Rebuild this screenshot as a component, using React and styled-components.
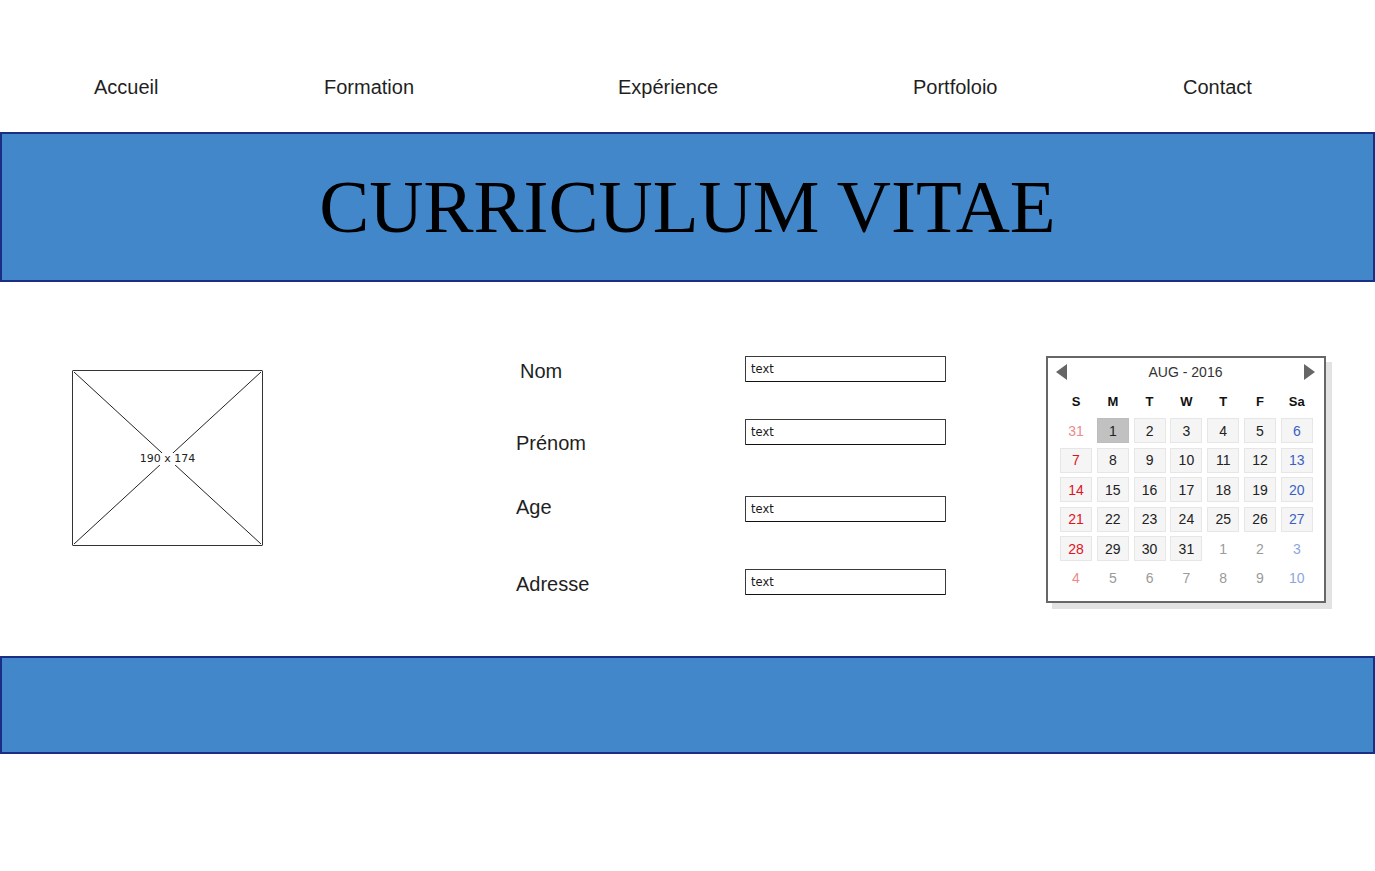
import React from "react";
import styled, { createGlobalStyle } from "styled-components";

const Global = createGlobalStyle`
  html, body { margin: 0; padding: 0; background: #fff; }
  body { font-family: "Liberation Sans", Arial, sans-serif; color: #1a1a1a; }
  * { box-sizing: border-box; }
`;

const Page = styled.div`
  width: 1375px;
  min-height: 871px;
  background: #fff;
`;

const Nav = styled.nav`
  height: 132px;
  padding: 75px 0 0 94px;
  display: grid;
  grid-template-columns: 230px 294px 295px 270px 1fr;
  align-items: start;
`;

const NavItem = styled.a`
  font-size: 20px;
  line-height: 24px;
  color: #1f1f1f;
  text-decoration: none;
`;

const Band = styled.div`
  width: 100%;
  height: ${(p) => p.$h}px;
  background: #4387cb;
  border: 2px solid #1a2e85;
  display: flex;
  align-items: center;
  justify-content: center;
`;

const Title = styled.h1`
  margin: 0;
  font-family: "Liberation Serif", "Times New Roman", serif;
  font-weight: 400;
  font-size: 75px;
  color: #000;
  letter-spacing: 0;
`;

const Main = styled.section`
  height: 374px;
  display: flex;
  align-items: flex-start;
  padding: 74px 0 0 72px;
`;

const ImageBox = styled.div`
  position: relative;
  margin-top: 14px;
  width: 191px;
  height: 176px;
  border: 1px solid #333;
  border-radius: 1px;
`;

const ImageLines = styled.svg`
  display: block;
  width: 100%;
  height: 100%;
`;

const ImageLabel = styled.span`
  position: absolute;
  left: 50%;
  top: 50%;
  transform: translate(-50%, -50%);
  margin-top: 1px;
  background: #fff;
  padding: 0 2px;
  font-family: "DejaVu Sans", Verdana, sans-serif;
  font-size: 11px;
  line-height: 12px;
  color: #222;
  white-space: nowrap;
`;

const Form = styled.div`
  margin-left: 253px;
  display: flex;
  flex-direction: column;
`;

const Row = styled.div`
  display: flex;
  align-items: center;
  height: 26px;
  margin-top: ${(p) => p.$mt}px;
`;

const Label = styled.label`
  width: 229px;
  padding-left: ${(p) => p.$pl}px;
  transform: translateY(${(p) => p.$dy}px);
  font-size: 20px;
  line-height: 24px;
  color: #1f1f1f;
`;

const TextInput = styled.div`
  width: 201px;
  height: 26px;
  border: 1px solid #3a3a3a;
  border-bottom-color: #111;
  border-radius: 1px;
  padding: 6px 0 0 5px;
  font-family: "DejaVu Sans", "Comic Sans MS", sans-serif;
  font-size: 11.5px;
  line-height: 12px;
  color: #1a1a1a;
`;

const Calendar = styled.div`
  margin-left: 100px;
  margin-top: 0;
  width: 280px;
  height: 247px;
  border: 2px solid #676767;
  box-shadow: 6px 6px 0 #e2e2e2;
  background: #fff;
  padding: 4px 10px 0 12px;
`;

const CalHeader = styled.div`
  height: 20px;
  display: flex;
  align-items: center;
  justify-content: space-between;
  margin: 0 -1px 0 -4px;
`;

const Arrow = styled.span`
  width: 0;
  height: 0;
  border-top: 8px solid transparent;
  border-bottom: 8px solid transparent;
  ${(p) =>
    p.$dir === "left"
      ? "border-right: 11px solid #666;"
      : "border-left: 11px solid #666;"}
`;

const Month = styled.span`
  font-size: 14px;
  color: #333;
`;

const Grid = styled.div`
  display: grid;
  grid-template-columns: repeat(7, 32px);
  column-gap: 4.8px;
  row-gap: ${(p) => p.$rg}px;
  margin-top: ${(p) => p.$mt}px;
`;

const DayHead = styled.div`
  height: 18px;
  line-height: 18px;
  text-align: center;
  font-size: 13px;
  font-weight: 700;
  color: #111;
`;

const colorFor = (kind, col) => {
  if (kind === "other") {
    if (col === 0) return "#ee8a8a";
    if (col === 6) return "#8ea6dc";
    return "#9a9a9a";
  }
  if (col === 0) return "#e0131d";
  if (col === 6) return "#3b5fc4";
  return "#222";
};

const Cell = styled.div`
  height: 25px;
  display: flex;
  align-items: center;
  justify-content: center;
  font-size: 14px;
  color: ${(p) => colorFor(p.$kind, p.$col)};
  background: ${(p) =>
    p.$kind === "other" ? "transparent" : p.$sel ? "#c1c1c1" : "#f5f5f5"};
  border: 1px solid
    ${(p) => (p.$kind === "other" ? "transparent" : p.$sel ? "#bdbdbd" : "#e6e6e6")};
`;

const days = ["S", "M", "T", "W", "T", "F", "Sa"];

const buildCells = () => {
  const cells = [{ n: 31, kind: "other" }];
  for (let i = 1; i <= 31; i++) cells.push({ n: i, kind: "cur" });
  for (let i = 1; i <= 10; i++) cells.push({ n: i, kind: "other" });
  return cells;
};

const fields = [
  { label: "Nom", mt: 0, pl: 4, dy: 2 },
  { label: "Prénom", mt: 37, pl: 0, dy: 11 },
  { label: "Age", mt: 51, pl: 0, dy: -2 },
  { label: "Adresse", mt: 47, pl: 0, dy: 2 },
];

export default function App() {
  const cells = buildCells();
  return (
    <Page>
      <Global />
      <Nav>
        <NavItem>Accueil</NavItem>
        <NavItem>Formation</NavItem>
        <NavItem>Expérience</NavItem>
        <NavItem>Portfoloio</NavItem>
        <NavItem>Contact</NavItem>
      </Nav>
      <Band $h={150}>
        <Title>CURRICULUM VITAE</Title>
      </Band>
      <Main>
        <ImageBox>
          <ImageLines viewBox="0 0 189 174" preserveAspectRatio="none">
            <line x1="1" y1="1" x2="188" y2="173" stroke="#222" strokeWidth="1" />
            <line x1="188" y1="1" x2="1" y2="173" stroke="#222" strokeWidth="1" />
          </ImageLines>
          <ImageLabel>190 x 174</ImageLabel>
        </ImageBox>
        <Form>
          {fields.map((f) => (
            <Row key={f.label} $mt={f.mt}>
              <Label $pl={f.pl} $dy={f.dy}>{f.label}</Label>
              <TextInput>text</TextInput>
            </Row>
          ))}
        </Form>
        <Calendar>
          <CalHeader>
            <Arrow $dir="left" />
            <Month>AUG - 2016</Month>
            <Arrow $dir="right" />
          </CalHeader>
          <Grid $mt={11} $rg={0}>
            {days.map((d, i) => (
              <DayHead key={i}>{d}</DayHead>
            ))}
          </Grid>
          <Grid $mt={7} $rg={4.6}>
            {cells.map((c, i) => (
              <Cell key={i} $kind={c.kind} $col={i % 7} $sel={c.kind === "cur" && c.n === 1}>
                {c.n}
              </Cell>
            ))}
          </Grid>
        </Calendar>
      </Main>
      <Band $h={98} />
    </Page>
  );
}
